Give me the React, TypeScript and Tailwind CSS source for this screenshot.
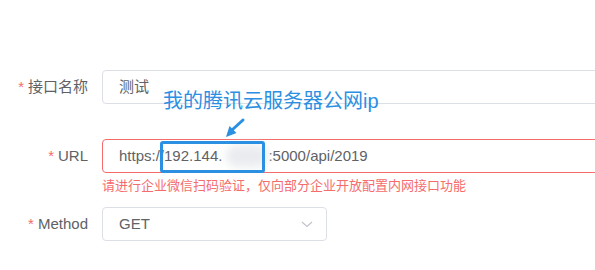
import React from 'react';

const font = { fontFamily: '"Liberation Sans", "Noto Sans CJK SC", sans-serif' };

function Label({ text }: { text: string }) {
  return (
    <label className="w-[102px] shrink-0 pr-[14px] text-right text-[15px] text-[#606266]">
      <span className="mr-[4px] text-[#f56c6c]">*</span>
      {text}
    </label>
  );
}

export default function App() {
  return (
    <div className="relative h-[270px] w-[595px] overflow-hidden bg-white" style={font}>
      <div className="flex flex-col pt-[70px]">
        {/* 接口名称 */}
        <div className="mb-[35px] flex items-center">
          <Label text="接口名称" />
          <div className="flex h-[34px] w-[520px] shrink-0 items-center rounded-[4px] border border-[#dcdfe6] px-[16px] text-[15px] text-[#606266]">
            测试
          </div>
        </div>

        {/* URL */}
        <div className="relative mb-[34px] flex items-center">
          <Label text="URL" />
          <div className="flex h-[34px] w-[520px] shrink-0 items-center rounded-[4px] border border-[#f56c6c] px-[16px] text-[15px] text-[#606266]">
            <span>https://192.144.</span>
            <span className="relative inline-block h-[22px] w-[46px]">
              <span className="absolute inset-y-0 left-[4px] right-0 rounded-full bg-[#e9ebee] blur-[5px]" />
            </span>
            <span>:5000/api/2019</span>
          </div>
          <div className="absolute left-[102px] top-[39px] text-[13px] leading-[16px] text-[#f56c6c]">
            请进行企业微信扫码验证，仅向部分企业开放配置内网接口功能
          </div>
        </div>

        {/* Method */}
        <div className="flex items-center">
          <Label text="Method" />
          <div className="flex h-[34px] w-[225px] shrink-0 items-center justify-between rounded-[4px] border border-[#dcdfe6] pl-[16px] pr-[12px] text-[15px] text-[#606266]">
            <span>GET</span>
            <svg width="14" height="14" viewBox="0 0 14 14" fill="none">
              <path d="M2 5 L7 9.5 L12 5" stroke="#c0c4cc" strokeWidth="1.2" />
            </svg>
          </div>
        </div>
      </div>

      {/* annotation overlay */}
      <div className="absolute left-[163px] top-[89px] text-[20px] leading-[24px] text-[#2b8fe2]">
        我的腾讯云服务器公网ip
      </div>
      <svg className="absolute left-[220px] top-[114px]" width="30" height="28" viewBox="0 0 30 28">
        <path d="M23 6 L12 16" stroke="#2b8fe2" strokeWidth="3" strokeLinecap="round" />
        <path d="M6 23 L9.5 12 L16.5 19 Z" fill="#2b8fe2" />
      </svg>
      <div className="absolute left-[160px] top-[141px] h-[32px] w-[105px] rounded-[3px] border-[3px] border-[#2b8fe2]" />
    </div>
  );
}
